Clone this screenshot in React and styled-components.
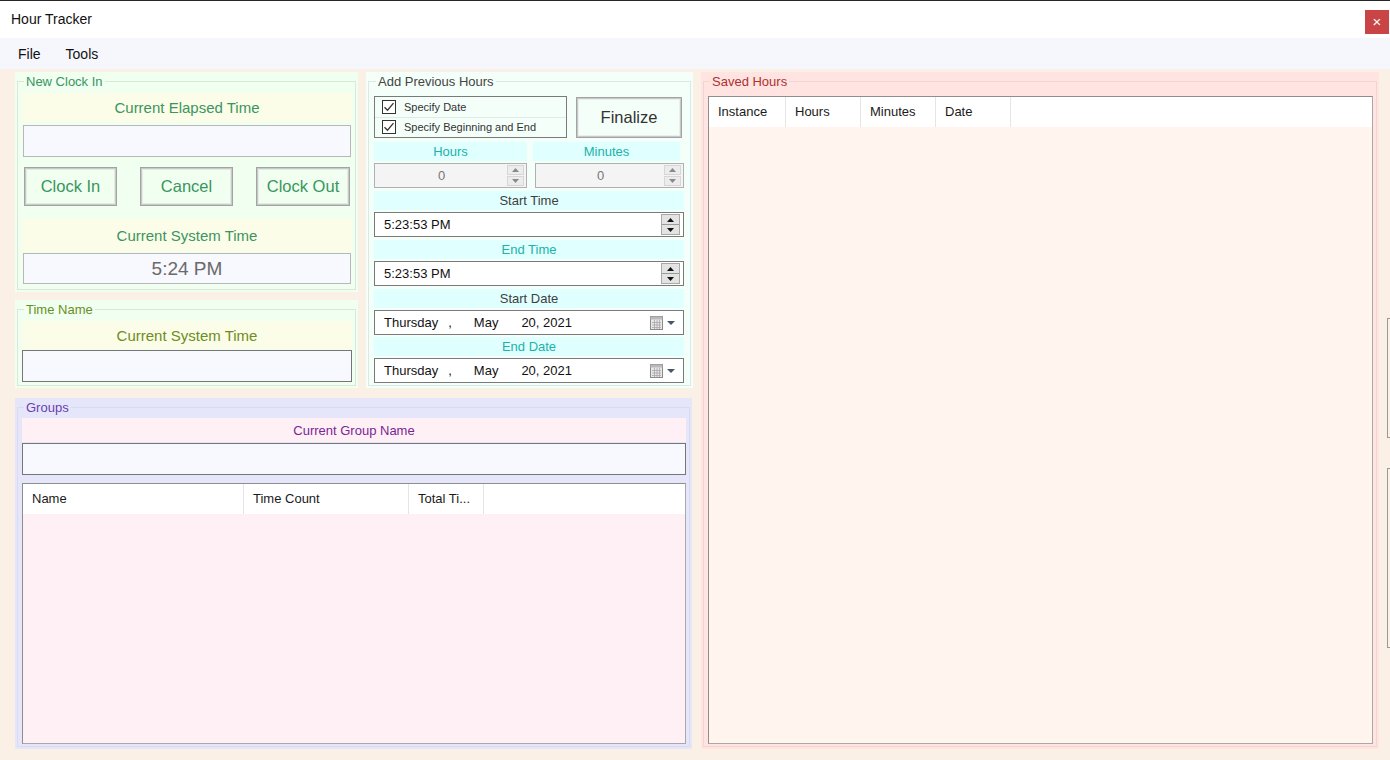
import styled, { createGlobalStyle } from "styled-components";

const GlobalStyle = createGlobalStyle`
  * { box-sizing: border-box; }
  body {
    margin: 0;
    font-family: "Liberation Sans", Arial, sans-serif;
    background: #faf0e6;
  }
`;

const groupsColumns = [
  { name: "Name", width: 221 },
  { name: "Time Count", width: 165 },
  { name: "Total Ti...", width: 75 },
];

const savedColumns = [
  { name: "Instance", width: 77 },
  { name: "Hours", width: 75 },
  { name: "Minutes", width: 75 },
  { name: "Date", width: 75 },
];

function CheckIcon() {
  return (
    <svg width="14" height="14" viewBox="0 0 14 14">
      <rect x="0.5" y="0.5" width="13" height="13" fill="#fff" stroke="#333" />
      <path d="M2.5 7.2 L5.5 10.2 L11.5 3.2" fill="none" stroke="#333" strokeWidth="1.3" />
    </svg>
  );
}

function CalendarIcon() {
  return (
    <svg width="28" height="16" viewBox="0 0 28 16">
      <rect x="1.5" y="1.5" width="12" height="13" fill="#e8e8e8" stroke="#8a8a8a" />
      <rect x="1.5" y="1.5" width="12" height="3" fill="#b9b9b9" />
      <path d="M3 7.5h9M3 10h9M3 12.5h9M5.5 5v9M8 5v9M10.5 5v9" stroke="#a6a6a6" strokeWidth="0.8" />
      <path d="M18 6 L26 6 L22 10 Z" fill="#4a5566" />
    </svg>
  );
}

function Arrow({ up, color }) {
  return (
    <svg width="7" height="4" viewBox="0 0 7 4">
      <path d={up ? "M0 4 L3.5 0 L7 4 Z" : "M0 0 L3.5 4 L7 0 Z"} fill={color} />
    </svg>
  );
}

function Group({ title, titleColor, bg, line, width, height, pad, children }) {
  return (
    <Panel $bg={bg} $w={width} $h={height}>
      <Frame $line={line} $pad={pad}>
        <Legend $color={titleColor}>{title}</Legend>
        {children}
      </Frame>
    </Panel>
  );
}

function NumberBox() {
  return (
    <NumBox>
      <NumValue>0</NumValue>
      <NumButtons>
        <NumButton><Arrow up color="#8a8a8a" /></NumButton>
        <NumButton><Arrow color="#8a8a8a" /></NumButton>
      </NumButtons>
    </NumBox>
  );
}

function TimeBox({ value }) {
  return (
    <Picker>
      <PickerText>{value}</PickerText>
      <TimeSpin>
        <TimeSpinHalf><Arrow up color="#111" /></TimeSpinHalf>
        <TimeSpinHalf $bottom><Arrow color="#111" /></TimeSpinHalf>
      </TimeSpin>
    </Picker>
  );
}

function DateBox() {
  return (
    <Picker>
      <PickerText>
        Thursday<DatePart $gap={10}>,</DatePart>
        <DatePart $gap={22}>May</DatePart>
        <DatePart $gap={23}>20, 2021</DatePart>
      </PickerText>
      <CalendarSlot>
        <CalendarIcon />
      </CalendarSlot>
    </Picker>
  );
}

function ListView({ columns, bg, height }) {
  return (
    <List $bg={bg} $h={height}>
      <ListHeader>
        {columns.map((c) => (
          <HeaderCell key={c.name} $w={c.width}>
            {c.name}
          </HeaderCell>
        ))}
      </ListHeader>
    </List>
  );
}

export default function App() {
  return (
    <>
      <GlobalStyle />
      <Window>
        <TitleBar>
          <Title>Hour Tracker</Title>
          <CloseButton>×</CloseButton>
        </TitleBar>
        <MenuBar>
          <MenuItem>File</MenuItem>
          <MenuItem>Tools</MenuItem>
        </MenuBar>

        <Main>
          <LeftArea>
            <TopRow>
              <LeftStack>
                <Group
                  title="New Clock In"
                  titleColor="#3a9560"
                  bg="#f0fff0"
                  line="#dae8da"
                  width={343}
                  height={220}
                  pad="4px 3px 4px 4px"
                >
                  <Band $bg="#fcfde9" $color="#3a9560" $h={29} $size={15}>
                    Current Elapsed Time
                  </Band>
                  <TextBox $h={32} $mt={3} $mx={1} $border="#b8b8b8" />
                  <ButtonRow>
                    <Button $w={93}>Clock In</Button>
                    <Button $w={93}>Cancel</Button>
                    <Button $w={94}>Clock Out</Button>
                  </ButtonRow>
                  <Band $bg="#fcfde9" $color="#3a9560" $h={33} $size={15} $mt={13}>
                    Current System Time
                  </Band>
                  <TextBox $h={31} $mt={1} $mx={1} $border="#b8b8b8">
                    <ClockText>5:24 PM</ClockText>
                  </TextBox>
                </Group>

                <Group
                  title="Time Name"
                  titleColor="#6b8e23"
                  bg="#f0fff0"
                  line="#dae8da"
                  width={343}
                  height={88}
                  pad="4px 3px 3px 4px"
                >
                  <Band $bg="#fcfde9" $color="#6b8e23" $h={28} $size={15}>
                    Current System Time
                  </Band>
                  <TextBox $h={32} $mt={1} $border="#767676" />
                </Group>
              </LeftStack>

              <Group
                title="Add Previous Hours"
                titleColor="#444"
                bg="#f5fffa"
                line="#dae9e4"
                width={327}
                height={316}
                pad="7px 6px 3px 5px"
              >
                <OptionsRow>
                  <CheckGroup>
                    <CheckRow $divider>
                      <CheckIcon />
                      <CheckLabel>Specify Date</CheckLabel>
                    </CheckRow>
                    <CheckRow>
                      <CheckIcon />
                      <CheckLabel>Specify Beginning and End</CheckLabel>
                    </CheckRow>
                  </CheckGroup>
                  <FinalizeButton>Finalize</FinalizeButton>
                </OptionsRow>

                <TwoCols>
                  <Band $bg="#e0ffff" $color="#20b2aa" $h={19} $size={13} $mt={4}>
                    Hours
                  </Band>
                  <Band $bg="#e0ffff" $color="#20b2aa" $h={19} $size={13} $mt={4} $mr={4}>
                    Minutes
                  </Band>
                  <NumberBox />
                  <NumberBox />
                </TwoCols>

                <Band $bg="#e0ffff" $color="#404040" $h={19} $size={13} $mt={3}>
                  Start Time
                </Band>
                <TimeBox value="5:23:53 PM" />
                <Band $bg="#e0ffff" $color="#20b2aa" $h={19} $size={13} $mt={3}>
                  End Time
                </Band>
                <TimeBox value="5:23:53 PM" />
                <Band $bg="#e0ffff" $color="#404040" $h={19} $size={13} $mt={3}>
                  Start Date
                </Band>
                <DateBox />
                <Band $bg="#e0ffff" $color="#20b2aa" $h={19} $size={13} $mt={2}>
                  End Date
                </Band>
                <DateBox />
              </Group>
            </TopRow>

            <Group
              title="Groups"
              titleColor="#6a3db0"
              bg="#e6e6fa"
              line="#dadaf0"
              width={677}
              height={351}
              pad="3px 3px 2px 4px"
            >
              <Band $bg="#fff0f5" $color="#7a2596" $h={24} $size={13}>
                Current Group Name
              </Band>
              <TextBox $h={32} $mt={1} $border="#767676" />
              <Spacer $h={8} />
              <ListView columns={groupsColumns} bg="#fff0f5" height={261} />
            </Group>
          </LeftArea>

          <Group
            title="Saved Hours"
            titleColor="#b03030"
            bg="#ffe4e1"
            line="#f2d4d0"
            width={679}
            height={677}
            pad="7px 3px 2px 4px"
          >
            <ListView columns={savedColumns} bg="#fff5ee" height={648} />
          </Group>

          <EdgeStrip>
            <EdgeLine $h={120} $mt={246} />
            <EdgeLine $h={180} $mt={30} />
          </EdgeStrip>
        </Main>
      </Window>
    </>
  );
}

const Window = styled.div`
  width: 1390px;
  height: 760px;
  display: flex;
  flex-direction: column;
  background: #faf0e6;
  border-top: 1px solid #262626;
  overflow: hidden;
`;

const TitleBar = styled.div`
  height: 37px;
  background: #fff;
  display: flex;
  justify-content: space-between;
  align-items: flex-start;
  padding: 0 1px 0 11px;
`;

const Title = styled.div`
  font-size: 14px;
  line-height: 36px;
  color: #111;
`;

const CloseButton = styled.div`
  width: 24px;
  height: 24px;
  margin-top: 9px;
  background: #c94444;
  color: #fff;
  font-size: 15px;
  line-height: 23px;
  text-align: center;
`;

const MenuBar = styled.div`
  height: 31px;
  background: #f5f7fd;
  display: flex;
  align-items: center;
  gap: 25px;
  padding-left: 18px;
`;

const MenuItem = styled.span`
  font-size: 14px;
  color: #111;
`;

const Main = styled.div`
  flex: 1;
  display: flex;
  gap: 8px;
  padding: 3px 0 0 15px;
`;

const LeftArea = styled.div`
  width: 678px;
  display: flex;
  flex-direction: column;
  gap: 10px;
`;

const TopRow = styled.div`
  display: flex;
  gap: 8px;
`;

const LeftStack = styled.div`
  display: flex;
  flex-direction: column;
  gap: 8px;
`;

const Panel = styled.div`
  width: ${(p) => p.$w}px;
  height: ${(p) => p.$h}px;
  background: ${(p) => p.$bg};
  padding: 2px;
  display: flex;
`;

const Frame = styled.fieldset`
  flex: 1;
  min-width: 0;
  margin: 0;
  border: 1px solid ${(p) => p.$line};
  padding: ${(p) => p.$pad};
  display: flex;
  flex-direction: column;
`;

const Legend = styled.legend`
  font-size: 13px;
  line-height: 15px;
  color: ${(p) => p.$color};
  margin-left: 2px;
  padding: 0 2px;
`;

const Band = styled.div`
  height: ${(p) => p.$h}px;
  margin-top: ${(p) => p.$mt || 0}px;
  margin-right: ${(p) => p.$mr || 0}px;
  background: ${(p) => p.$bg};
  color: ${(p) => p.$color};
  font-size: ${(p) => p.$size}px;
  display: flex;
  align-items: center;
  justify-content: center;
  flex-shrink: 0;
`;

const TextBox = styled.div`
  height: ${(p) => p.$h}px;
  margin: ${(p) => p.$mt || 0}px ${(p) => p.$mx || 0}px 0;
  background: #f8f8ff;
  border: 1px solid ${(p) => p.$border};
  display: flex;
  align-items: center;
  justify-content: center;
  flex-shrink: 0;
`;

const ClockText = styled.span`
  font-size: 19px;
  color: #6a6a6a;
`;

const ButtonRow = styled.div`
  margin-top: 10px;
  padding: 0 2px;
  display: flex;
  justify-content: space-between;
`;

const Button = styled.div`
  width: ${(p) => p.$w}px;
  height: 39px;
  border: 1px solid #a3a3a3;
  box-shadow: inset 0 0 0 1px #c9c9c9, inset 0 0 0 2px #e2ece2;
  display: flex;
  align-items: center;
  justify-content: center;
  font-size: 16.5px;
  color: #3a9560;
`;

const OptionsRow = styled.div`
  display: flex;
  gap: 9px;
`;

const CheckGroup = styled.div`
  width: 193px;
  height: 42px;
  border: 1px solid #7a7a7a;
  display: flex;
  flex-direction: column;
`;

const CheckRow = styled.div`
  flex: 1;
  display: flex;
  align-items: center;
  gap: 8px;
  padding-left: 7px;
  border-bottom: ${(p) => (p.$divider ? "1px solid #e2e8e6" : "none")};
`;

const CheckLabel = styled.span`
  font-size: 11px;
  color: #333;
`;

const FinalizeButton = styled.div`
  width: 106px;
  height: 41px;
  margin-top: 1px;
  border: 1px solid #a3a3a3;
  box-shadow: inset 0 0 0 1px #c9c9c9, inset 0 0 0 2px #e6f0ec;
  display: flex;
  align-items: center;
  justify-content: center;
  font-size: 16.5px;
  color: #333;
`;

const TwoCols = styled.div`
  display: grid;
  grid-template-columns: 153px 1fr;
  column-gap: 6px;
  row-gap: 2px;
`;

const NumBox = styled.div`
  height: 25px;
  background: #f4f4f4;
  border: 1px solid #b0b0b0;
  display: flex;
  align-items: stretch;
  padding: 1px;
  & + & {
    margin-left: 2px;
  }
`;

const NumValue = styled.div`
  flex: 1;
  display: flex;
  align-items: center;
  justify-content: center;
  font-size: 13px;
  color: #777;
`;

const NumButtons = styled.div`
  width: 17px;
  margin-right: 1px;
  display: flex;
  flex-direction: column;
  gap: 1px;
`;

const NumButton = styled.div`
  flex: 1;
  background: #ececec;
  border: 1px solid #d6d6d6;
  display: flex;
  align-items: center;
  justify-content: center;
`;

const Picker = styled.div`
  height: 25px;
  margin-top: 2px;
  background: #fff;
  border: 1px solid #7a7a7a;
  display: flex;
  align-items: center;
  justify-content: space-between;
  padding-left: 9px;
  flex-shrink: 0;
`;

const PickerText = styled.div`
  font-size: 13px;
  color: #111;
  display: flex;
`;

const DatePart = styled.span`
  margin-left: ${(p) => p.$gap}px;
  color: #111;
`;

const TimeSpin = styled.div`
  width: 19px;
  height: 21px;
  margin-right: 3px;
  background: #e3e3e3;
  border: 1px solid #a8a8a8;
  display: flex;
  flex-direction: column;
`;

const TimeSpinHalf = styled.div`
  flex: 1;
  display: flex;
  align-items: center;
  justify-content: center;
  border-top: ${(p) => (p.$bottom ? "1px solid #9a9a9a" : "none")};
`;

const CalendarSlot = styled.div`
  display: flex;
  align-items: center;
  margin-right: 6px;
`;

const Spacer = styled.div`
  height: ${(p) => p.$h}px;
  flex-shrink: 0;
`;

const List = styled.div`
  height: ${(p) => p.$h}px;
  background: ${(p) => p.$bg};
  border: 1px solid #8e8e8e;
  border-right-color: #a8a8a8;
  border-bottom-color: #a8a8a8;
  flex-shrink: 0;
`;

const ListHeader = styled.div`
  height: 30px;
  background: #fff;
  display: flex;
`;

const HeaderCell = styled.div`
  width: ${(p) => p.$w}px;
  padding-left: 9px;
  border-right: 1px solid #e5e5e5;
  font-size: 13px;
  line-height: 30px;
  color: #1a1a1a;
  white-space: nowrap;
  overflow: hidden;
`;

const EdgeStrip = styled.div`
  flex: 1;
  display: flex;
  flex-direction: column;
  align-items: flex-end;
`;

const EdgeLine = styled.div`
  width: 3px;
  height: ${(p) => p.$h}px;
  margin-top: ${(p) => p.$mt}px;
  border-left: 1px solid #9a9a9a;
  border-top: 1px solid #9a9a9a;
  border-bottom: 1px solid #9a9a9a;
`;
